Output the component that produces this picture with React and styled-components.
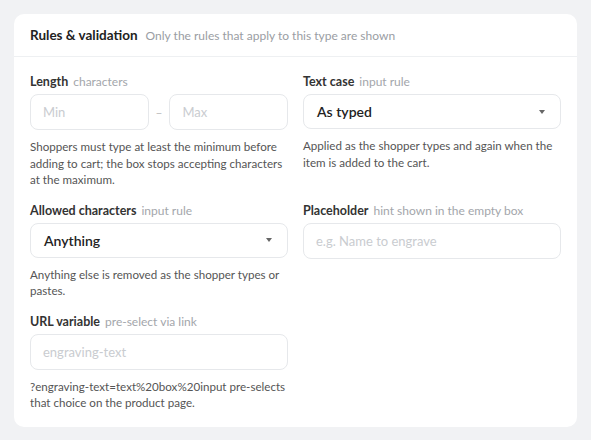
import React from 'react';
import styled, { createGlobalStyle } from 'styled-components';

const Global = createGlobalStyle`
  html, body {
    margin: 0;
    padding: 0;
    background: #f1f2f4;
    font-family: "Lato", "Noto Sans", sans-serif;
    color: #222;
  }
`;

const Page = styled.div`
  padding: 14px;
  width: 591px;
  box-sizing: border-box;
`;

const Card = styled.section`
  background: #fff;
  border-radius: 10px;
  width: 563px;
  box-sizing: border-box;
`;

const Header = styled.div`
  display: flex;
  align-items: baseline;
  gap: 8px;
  padding: 13px 16px 13px;
  border-bottom: 1px solid #eef0f2;

  h2 {
    margin: 0;
    font-size: 13.5px;
    font-weight: 700;
    color: #222;
  }
  span {
    font-size: 12px;
    color: #9a9da3;
  }
`;

const Body = styled.div`
  display: grid;
  grid-template-columns: 1fr 1fr;
  align-items: start;
  column-gap: 15px;
  row-gap: 13px;
  padding: 16px 16px 15px;
`;

const Field = styled.div`
  display: flex;
  flex-direction: column;
  min-width: 0;
`;

const Label = styled.div`
  font-size: 12.5px;
  font-weight: 700;
  color: #333;
  margin-bottom: 3px;
  line-height: 18px;

  small {
    font-size: 12px;
    font-weight: 400;
    color: #a3a6ab;
    margin-left: 5px;
  }
`;

const Box = styled.div`
  height: ${p => (p.$value ? '35px' : '36px')};
  box-sizing: border-box;
  border: 1px solid #e6e8eb;
  border-radius: 8px;
  display: flex;
  align-items: center;
  justify-content: space-between;
  padding: 0 12px 0 ${p => (p.$value ? '13px' : '12px')};
  font-size: ${p => (p.$value ? '14px' : '13px')};
  color: ${p => (p.$value ? '#222' : '#c9ccd0')};
  font-weight: ${p => (p.$value ? 600 : 400)};
  flex: ${p => (p.$grow ? '1 1 0' : 'none')};
`;

const Caret = styled.span`
  width: 0;
  height: 0;
  border-left: 3px solid transparent;
  border-right: 3px solid transparent;
  border-top: 4px solid #666;
  margin-right: 3px;
`;

const Range = styled.div`
  display: flex;
  align-items: center;
  gap: 7px;
`;

const Dash = styled.span`
  color: #bbb;
  font-size: 12px;
`;

const Help = styled.p`
  margin: 9px 0 0;
  font-size: 11.6px;
  line-height: 16.5px;
  color: #555;
`;

const Select = ({ value }) => (
  <Box $value>
    {value}
    <Caret />
  </Box>
);

export default function App() {
  return (
    <Page>
      <Global />
      <Card>
        <Header>
          <h2>Rules &amp; validation</h2>
          <span>Only the rules that apply to this type are shown</span>
        </Header>
        <Body>
          <Field>
            <Label>Length<small>characters</small></Label>
            <Range>
              <Box $grow>Min</Box>
              <Dash>–</Dash>
              <Box $grow>Max</Box>
            </Range>
            <Help>
              Shoppers must type at least the minimum before adding to cart; the box stops
              accepting characters at the maximum.
            </Help>
          </Field>
          <Field>
            <Label>Text case<small>input rule</small></Label>
            <Select value="As typed" />
            <Help>Applied as the shopper types and again when the item is added to the cart.</Help>
          </Field>
          <Field>
            <Label>Allowed characters<small>input rule</small></Label>
            <Select value="Anything" />
            <Help>Anything else is removed as the shopper types or pastes.</Help>
          </Field>
          <Field>
            <Label>Placeholder<small>hint shown in the empty box</small></Label>
            <Box>e.g. Name to engrave</Box>
          </Field>
          <Field>
            <Label>URL variable<small>pre-select via link</small></Label>
            <Box>engraving-text</Box>
            <Help>?engraving-text=text%20box%20input pre-selects that choice on the product page.</Help>
          </Field>
        </Body>
      </Card>
    </Page>
  );
}
